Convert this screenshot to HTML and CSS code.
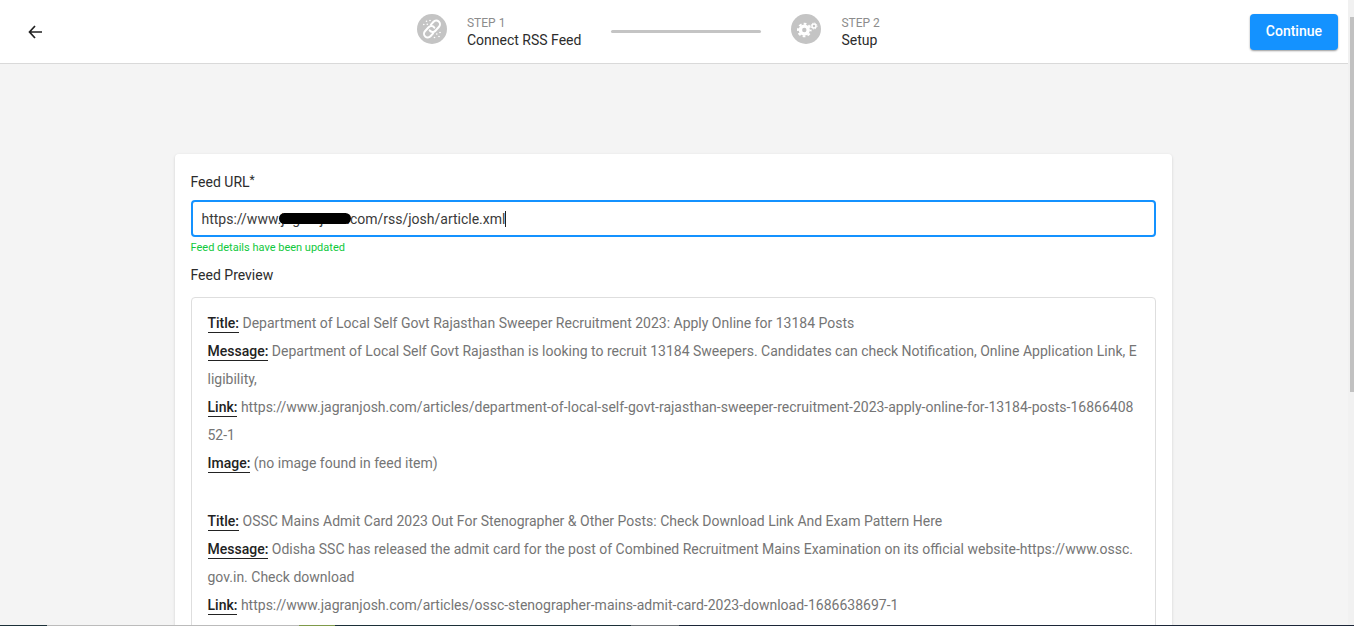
FILE: index.html
```html
<!DOCTYPE html>
<html lang="en">
<head>
<meta charset="utf-8">
<title>Connect RSS Feed</title>
<link rel="stylesheet" href="styles.css">
</head>
<body>
<div class="window">
  <div class="page">
    <header class="topbar">
      <button class="back" type="button" aria-label="Back">
        <svg width="14" height="14" viewBox="0 0 14 14" fill="none" stroke="#222" stroke-width="1.7"><path d="M7 1 1.5 7 7 13M1.5 7H14"/></svg>
      </button>
      <div class="stepper">
        <div class="step">
          <svg class="step-icon" viewBox="0 0 30 30">
            <circle cx="15" cy="15" r="15" fill="#c4c4c4"/>
            <g fill="none" stroke="#fff" stroke-width="2" stroke-linecap="round" transform="rotate(-48 15 15)">
              <path d="M12.500 18.700H8.600a3.700 3.700 0 0 1 0-7.400H14a3.700 3.700 0 0 1 3.600 4.500"/>
              <path d="M17.500 11.300H21.400a3.700 3.700 0 0 1 0 7.400H16a3.700 3.700 0 0 1-3.600-4.500"/>
            </g>
            <g fill="#fff"><circle cx="9.500" cy="7.200" r=".8"/><circle cx="13" cy="6.500" r=".8"/><circle cx="6.800" cy="10.500" r=".8"/><circle cx="10.300" cy="10.300" r=".8"/><circle cx="23" cy="18.500" r=".8"/><circle cx="17.500" cy="23.500" r=".8"/><circle cx="19.800" cy="20" r=".8"/><circle cx="22" cy="22.500" r=".8"/></g>
          </svg>
          <div class="step-text"><span class="step-number">STEP 1</span><span class="step-name">Connect RSS Feed</span></div>
        </div>
        <div class="step-line"></div>
        <div class="step">
          <svg class="step-icon" viewBox="0 0 30 30">
            <circle cx="15" cy="15" r="15" fill="#c4c4c4"/>
            <g fill="none" stroke="#fff">
              <circle cx="13.300" cy="16" r="3.900" stroke-width="3.400"/>
              <circle cx="13.300" cy="16" r="6.300" stroke-width="2" stroke-dasharray="2.750 2.198" stroke-dashoffset="1.375"/>
              <circle cx="23" cy="12" r="2" stroke-width="1.400"/>
              <circle cx="23" cy="12" r="3" stroke-width="1" stroke-dasharray="1.300 1.056"/>
            </g>
          </svg>
          <div class="step-text"><span class="step-number">STEP 2</span><span class="step-name">Setup</span></div>
        </div>
      </div>
      <button class="continue" type="button">Continue</button>
    </header>
    <main class="content">
      <form class="card">
        <label class="label" for="feed-url">Feed URL<span class="required">*</span></label>
        <div class="field">
          <input class="input" id="feed-url" type="text" value="https://www.jagranjosh.com/rss/josh/article.xml">
          <span class="redaction"></span>
          <span class="caret"></span>
        </div>
        <p class="status">Feed details have been updated</p>
        <h2 class="label">Feed Preview</h2>
        <div class="preview">
          <article class="item">
            <p><b>Title:</b> Department of Local Self Govt Rajasthan Sweeper Recruitment 2023: Apply Online for 13184 Posts</p>
            <p><b>Message:</b> Department of Local Self Govt Rajasthan is looking to recruit 13184 Sweepers. Candidates can check Notification, Online Application Link, Eligibility,</p>
            <p><b>Link:</b> https://www.jagranjosh.com/articles/department-of-local-self-govt-rajasthan-sweeper-recruitment-2023-apply-online-for-13184-posts-1686640852-1</p>
            <p><b>Image:</b> (no image found in feed item)</p>
          </article>
          <article class="item">
            <p><b>Title:</b> OSSC Mains Admit Card 2023 Out For Stenographer &amp; Other Posts: Check Download Link And Exam Pattern Here</p>
            <p><b>Message:</b> Odisha SSC has released the admit card for the post of Combined Recruitment Mains Examination on its official website-https://www.ossc.gov.in. Check download</p>
            <p><b>Link:</b> https://www.jagranjosh.com/articles/ossc-stenographer-mains-admit-card-2023-download-1686638697-1</p>
          </article>
        </div>
      </form>
    </main>
  </div>
  <div class="scrollbar"><div class="thumb"></div></div>
  <div class="taskbar"></div>
</div>
</body>
</html>
```
FILE: styles.css
```css
* { box-sizing: border-box; }
body { margin: 0; font-family: Roboto, "Liberation Sans", sans-serif; font-size: 14px; color: #2c2c2c; background: #f4f4f4; }
p, h2 { margin: 0; }
button, input { font: inherit; }

.window { display: grid; grid-template-columns: 1fr 6px; grid-template-rows: 1fr 1px; height: 100vh; overflow: hidden; }
.page { display: flex; flex-direction: column; min-height: 0; overflow: hidden; }

.topbar { display: flex; align-items: center; justify-content: space-between; flex: none; height: 64px; padding: 0 10px 0 23px; background: #fff; border-bottom: 1px solid #d9d9d9; }
.back { display: flex; align-items: center; justify-content: center; width: 24px; height: 24px; padding: 0; border: 0; background: none; }
.stepper { display: flex; align-items: center; gap: 30px; }
.step { display: flex; align-items: flex-start; gap: 20px; }
.step-icon { width: 30px; height: 30px; }
.step-text { display: flex; flex-direction: column; }
.step-number { font-size: 12px; line-height: 18px; color: #8c8c8c; }
.step-name { line-height: 16px; padding-bottom: 2px; }
.step-line { width: 150px; height: 3px; border-radius: 2px; background: #c4c4c4; }
.continue { height: 36px; padding: 0 16px 2px; border: 0; border-radius: 4px; background: #1492ff; color: #fff; font-weight: 500; box-shadow: 0 1px 2px rgba(0, 0, 0, .4); }

.content { padding: 90px 18px 0 16px; }
.card { max-width: 997px; margin: 0 auto; padding: 18px 16px; border-radius: 4px; background: #fff; box-shadow: 0 1px 3px rgba(0, 0, 0, .15); }
.label { display: block; font-size: 14px; font-weight: 400; line-height: 20px; }
.required { font-size: 12px; vertical-align: 3px; line-height: 1; }
.field { position: relative; margin-top: 8px; }
.input { display: block; width: 100%; height: 37px; padding: 0 9px; border: 2px solid #1492ff; border-radius: 4px; outline: 0; background: #fff; color: #3a3a3a; }
.redaction { position: absolute; left: 88px; top: 13px; width: 72px; height: 11px; border-radius: 6px; background: #000; }
.caret { position: absolute; left: 314px; top: 11px; width: 1px; height: 16px; background: #222; }
.status { margin: 3px 0 9px; font-size: 11px; line-height: 16px; color: #10c83c; }
.preview { margin-top: 12px; padding: 11px 16px; border: 1px solid #dedede; border-radius: 4px; line-height: 28px; color: #757575; word-break: break-all; }
.preview b { padding-bottom: 1px; border-bottom: 1px solid #222; color: #222; font-weight: 500; }
.item + .item { margin-top: 30px; }

.scrollbar { padding: 17px 0 0 2px; background: #f1f1f1; }
.thumb { height: 375px; background: #c1c1c1; }
.taskbar { grid-column: 1 / -1; background: linear-gradient(90deg, #1c3038 47px, #bbb 47px 299px, #7f9a4a 299px 335px, #1c3038 335px 631px, #6a6f74 631px 679px, #1c2638 679px); }
```
